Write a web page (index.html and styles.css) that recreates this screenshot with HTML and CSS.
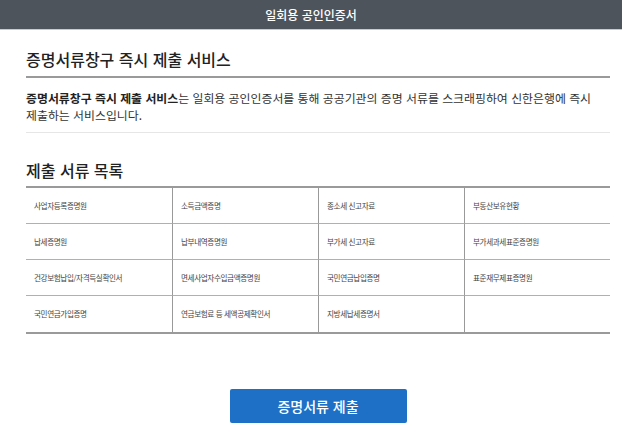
FILE: index.html
```html
<!DOCTYPE html>
<html lang="ko">
<head>
<meta charset="utf-8">
<link rel="stylesheet" href="styles.css">
</head>
<body>
<header class="topbar">일회용 공인인증서</header>
<main class="content">
  <h2 class="section-title">증명서류창구 즉시 제출 서비스</h2>
  <p class="desc"><strong>증명서류창구 즉시 제출 서비스</strong>는 일회용 공인인증서를 통해 공공기관의 증명 서류를 스크래핑하여 신한은행에 즉시 제출하는 서비스입니다.</p>
  <h2 class="list-title">제출 서류 목록</h2>
  <div class="doc-grid">
    <div class="cell">사업자등록증명원</div>
    <div class="cell">소득금액증명</div>
    <div class="cell">종소세 신고자료</div>
    <div class="cell">부동산보유현황</div>
    <div class="cell">납세증명원</div>
    <div class="cell">납부내역증명원</div>
    <div class="cell">부가세 신고자료</div>
    <div class="cell">부가세과세표준증명원</div>
    <div class="cell">건강보험납입/자격득실확인서</div>
    <div class="cell">면세사업자수입금액증명원</div>
    <div class="cell">국민연금납입증명</div>
    <div class="cell">표준재무제표증명원</div>
    <div class="cell">국민연금가입증명</div>
    <div class="cell">연금보험료 등 세액공제확인서</div>
    <div class="cell">지방세납세증명서</div>
    <div class="cell"></div>
  </div>
  <div class="actions">
    <button class="submit-btn" type="button">증명서류 제출</button>
  </div>
</main>
</body>
</html>
```

FILE: styles.css
```css
* { box-sizing: border-box; }
html, body { margin: 0; padding: 0; background: #fff; }
body {
  font-family: "Noto Sans CJK KR", "Noto Sans", sans-serif;
  color: #222;
}
.topbar {
  height: 30px;
  background: #4d545c;
  border-bottom: 1px solid #c8cacc;
  color: #fff;
  font-size: 12px;
  font-weight: 500;
  line-height: 29px;
  text-align: center;
}
.content {
  padding: 0 12px 0 26px;
}
.section-title {
  margin: 19px 0 0;
  font-size: 16px;
  line-height: 20px;
  font-weight: 500;
  color: #222;
  padding-bottom: 7px;
  border-bottom: 2px solid #9a9a9a;
}
.desc {
  margin: 0;
  padding: 11px 0 9px;
  font-size: 11.9px;
  line-height: 17px;
  color: #333;
  word-break: keep-all;
  border-bottom: 1px solid #e6e6e6;
}
.desc strong { font-weight: 700; color: #222; }
.list-title {
  margin: 27px 0 6px;
  font-size: 16px;
  line-height: 20px;
  font-weight: 500;
  color: #222;
}
.doc-grid {
  display: grid;
  grid-template-columns: repeat(4, 1fr);
  border-top: 2px solid #9a9a9a;
  border-bottom: 2px solid #9a9a9a;
}
.cell {
  height: 36px;
  padding-left: 8px;
  font-size: 7.6px;
  letter-spacing: -0.4px;
  line-height: 35px;
  color: #444;
  border-left: 1px solid #999;
  border-bottom: 1px solid #b0b0b0;
}
.cell:nth-child(4n+1) { border-left: none; }
.cell:nth-last-child(-n+4) { border-bottom: none; }
.actions {
  display: flex;
  justify-content: center;
  margin-top: 55px;
}
.submit-btn {
  width: 177px;
  height: 34px;
  border: none;
  border-radius: 2px;
  background: #1e70c6;
  color: #fff;
  font-family: "Noto Sans CJK KR", sans-serif;
  font-size: 14px;
  font-weight: 500;
  cursor: pointer;
}
```
